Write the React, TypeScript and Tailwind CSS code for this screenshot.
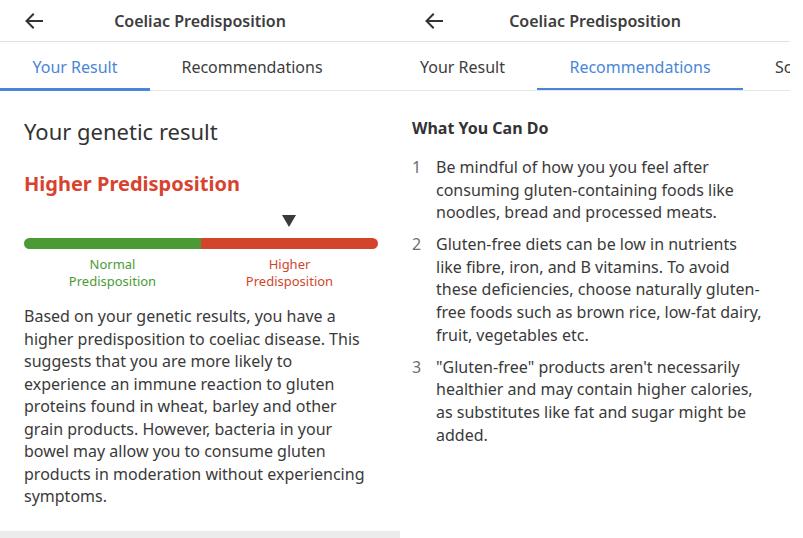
import React from "react";

const font = { fontFamily: '"Noto Sans", "Open Sans", sans-serif' };

function Arrow() {
  return (
    <svg width="18" height="16" viewBox="0 0 18 16" fill="none">
      <path d="M17 8H2M8 1.5L1.5 8L8 14.5" stroke="#333" strokeWidth="2" strokeLinecap="square" />
    </svg>
  );
}

function Header() {
  return (
    <div className="relative h-[42px] flex items-center justify-center border-b border-[#e2e2e2]">
      <div className="absolute left-[25px] top-[13px]">
        <Arrow />
      </div>
      <span className="text-[16px] font-semibold text-[#3d3d3d]">Coeliac Predisposition</span>
    </div>
  );
}

export default function App() {
  return (
    <div className="w-[803px] h-[538px] bg-white flex overflow-hidden" style={font}>
      {/* Left */}
      <div className="w-[400px] h-full flex flex-col shrink-0">
        <Header />
        <div className="relative h-[49px] flex border-b border-[#e6e6e6]">
          <div className="relative w-[150px] flex items-center justify-center pt-[1px] text-[16px] text-[#4a86d8]">
            Your Result
            <div className="absolute left-0 right-0 bottom-[-1px] h-[3px] bg-[#4a86d8]" />
          </div>
          <div className="w-[204px] flex items-center justify-center pt-[1px] text-[16px] text-[#3d3d3d]">
            Recommendations
          </div>
        </div>
        <div className="flex-1 px-[24px] flex flex-col">
          <div className="mt-[25px] text-[22px] leading-[30px] text-[#333]">Your genetic result</div>
          <div className="mt-[24px] text-[20px] leading-[28px] font-bold text-[#d8432f]">Higher Predisposition</div>
          <div className="mt-[17px] relative h-[14px] w-[354px]">
            <svg className="absolute left-[258px] top-0" width="14" height="12" viewBox="0 0 14 12">
              <path d="M0 0H14L7 12Z" fill="#3a3a3a" />
            </svg>
          </div>
          <div className="mt-[9px] flex w-[354px] h-[11px] rounded-full overflow-hidden">
            <div className="w-[177px] bg-[#4b9a36]" />
            <div className="flex-1 bg-[#d2452c]" />
          </div>
          <div className="mt-[7px] flex w-[354px] text-[13px] leading-[17px] text-center">
            <div className="w-[177px] text-[#4b9a36]">Normal<br />Predisposition</div>
            <div className="flex-1 text-[#d2452c]">Higher<br />Predisposition</div>
          </div>
          <p className="mt-[15px] text-[16px] leading-[22.5px] text-[#3a3a3a]">
            Based on your genetic results, you have a higher predisposition to coeliac disease. This suggests that you are more likely to experience an immune reaction to gluten proteins found in wheat, barley and other grain products. However, bacteria in your bowel may allow you to consume gluten products in moderation without experiencing symptoms.
          </p>
        </div>
        <div className="h-[7px] bg-[#ececec]" />
      </div>

      {/* Right */}
      <div className="w-[390px] h-full flex flex-col shrink-0 overflow-hidden">
        <Header />
        <div className="relative h-[49px] border-b border-[#e6e6e6] overflow-hidden">
          <div className="absolute left-[-12px] top-0 bottom-0 flex">
            <div className="w-[149px] flex items-center justify-center pt-[1px] text-[16px] text-[#3d3d3d]">Your Result</div>
            <div className="relative w-[206px] flex items-center justify-center pt-[1px] text-[16px] text-[#4a86d8]">
              Recommendations
              <div className="absolute left-0 right-0 bottom-[-1px] h-[3px] bg-[#4a86d8]" />
            </div>
            <div className="w-[66px] overflow-hidden whitespace-nowrap flex items-center pl-[32px] pt-[1px] text-[16px] text-[#3d3d3d]">Science</div>
          </div>
        </div>
        <div className="px-[12px]">
          <div className="mt-[26px] text-[16px] leading-[22px] font-bold text-[#333]">What You Can Do</div>
          <ol className="mt-[17px] flex flex-col gap-[9.5px] text-[16px] leading-[22.6px]">
            {[
              "Be mindful of how you you feel after consuming gluten-containing foods like noodles, bread and processed meats.",
              "Gluten-free diets can be low in nutrients like fibre, iron, and B vitamins. To avoid these deficiencies, choose naturally gluten-free foods such as brown rice, low-fat dairy, fruit, vegetables etc.",
              "\"Gluten-free\" products aren't necessarily healthier and may contain higher calories, as substitutes like fat and sugar might be added.",
            ].map((t, i) => (
              <li key={i} className="flex">
                <span className="w-[24px] shrink-0 text-[#6f6f6f]">{i + 1}</span>
                <span className="w-[328px] text-[#3a3a3a]">{t}</span>
              </li>
            ))}
          </ol>
        </div>
      </div>
      <div className="flex-1" />
    </div>
  );
}
